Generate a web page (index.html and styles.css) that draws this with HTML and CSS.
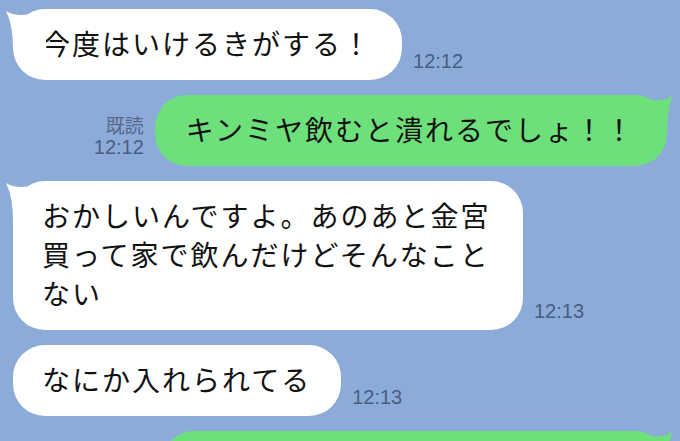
FILE: index.html
```html
<!DOCTYPE html>
<html lang="ja">
<head>
    <meta charset="UTF-8">
    <meta name="viewport" content="width=device-width, initial-scale=1.0">
    <title>トーク</title>
    <link rel="stylesheet" href="styles.css">
</head>
<body>
    <div class="chat">
        <div class="row in">
            <div class="bubble tail">今度はいけるきがする！</div>
            <div class="meta"><span class="time">12:12</span></div>
        </div>
        <div class="row out">
            <div class="meta"><span class="read">既読</span><span class="time">12:12</span></div>
            <div class="bubble tail">キンミヤ飲むと潰れるでしょ！！</div>
        </div>
        <div class="row in">
            <div class="bubble tail wide">おかしいんですよ。あのあと金宮買って家で飲んだけどそんなことない</div>
            <div class="meta"><span class="time">12:13</span></div>
        </div>
        <div class="row in">
            <div class="bubble">なにか入れられてる</div>
            <div class="meta"><span class="time">12:13</span></div>
        </div>
        <div class="row out">
            <div class="bubble tail last"></div>
        </div>
    </div>
</body>
</html>
```
FILE: styles.css
```css
html, body {
    margin: 0;
    padding: 0;
    height: 100%;
    overflow: hidden;
}
body {
    background-color: #8CABD9;
    font-family: "Noto Sans CJK JP", "Noto Sans", sans-serif;
    color: #111;
}
.chat {
    display: flex;
    flex-direction: column;
    gap: 15px;
    padding: 9px 13px 0 13px;
}
.row {
    display: flex;
    align-items: flex-end;
    gap: 11px;
}
.row.out {
    justify-content: flex-end;
}

.bubble {
    position: relative;
    background: #fff;
    font-size: 28px;
    letter-spacing: 2px;
    line-height: 39px;
    padding: 15px 30px 17px 29px;
    border-radius: 32px;
    box-sizing: border-box;
}
.bubble.wide {
    max-width: 510px;
}
.out .bubble {
    background: #6DE07B;
    padding-left: 31px;
    padding-right: 32px;
}
/* next message, only its top edge is on screen */
.out .bubble.last {
    width: 505px;
    height: 72px;
}

/* speech tail */
.bubble.tail::before {
    content: "";
    position: absolute;
    top: 0;
    width: 40px;
    height: 40px;
    background: inherit;
}
.in .bubble.tail::before {
    left: -7px;
    clip-path: path("M0 2 Q 14 11 40 0 L 40 40 L 7 40 Q 7 16 0 2 Z");
}
.out .bubble.tail::before {
    right: -5px;
    clip-path: path("M40 1 Q 27 10 0 0 L 0 40 L 35 40 Q 35 16 40 1 Z");
}

.meta {
    display: flex;
    flex-direction: column;
    align-items: flex-end;
    margin-bottom: 9px;
    font-family: "Liberation Sans", Arial, sans-serif;
    color: #4A5D82;
}
.in .meta {
    align-items: flex-start;
}
.time {
    font-size: 20px;
    line-height: 20px;
}
.read {
    font-family: "Noto Sans CJK JP", sans-serif;
    font-size: 19px;
    line-height: 24px;
    color: #56698C;
}
```
